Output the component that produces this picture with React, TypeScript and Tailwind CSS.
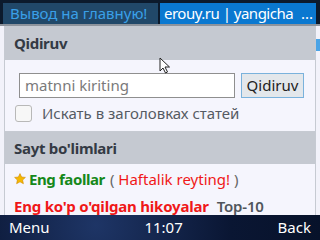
import React from "react";

const Star = () => (
  <svg viewBox="0 0 12 12" className="h-[12px] w-[12px] shrink-0">
    <path
      d="M6 0.6l1.6 3.4 3.8.4-2.8 2.6.8 3.7L6 8.8 2.6 10.7l.8-3.7L.6 4.4l3.8-.4z"
      fill="#f5b800"
      stroke="#d08a00"
      strokeWidth="0.6"
    />
  </svg>
);

const Cursor = () => (
  <svg viewBox="0 0 12 18" className="absolute left-[159px] top-[57px] h-[18px] w-[12px]">
    <path d="M1 1v13l3-3 2.5 5 2-1-2.5-5h4.5z" fill="#fff" stroke="#222" strokeWidth="1" />
  </svg>
);

export default function App() {
  return (
    <div
      className="relative flex h-[240px] w-[320px] flex-col overflow-hidden bg-[#0c1a2c]"
      style={{ fontFamily: '"Noto Sans", "DejaVu Sans", sans-serif' }}
    >
      {/* tabs */}
      <div className="flex h-[24px] shrink-0 gap-[2px] px-[3px] pt-[3px]">
        <div className="flex w-[155px] shrink-0 items-center bg-[#214869] pl-[7px] text-[15px] leading-none text-[#3aa0e8]">
          Вывод на главную!
        </div>
        <div className="flex w-[156px] shrink-0 items-center justify-between whitespace-nowrap bg-[#0a78d0] pl-[4px] pr-[3px] text-[15px] leading-none tracking-[-0.5px] text-white">
          <span>erouy.ru | yangicha</span>
          <span className="tracking-[0px]">...</span>
        </div>
      </div>

      {/* page */}
      <div className="flex min-h-0 flex-1 overflow-hidden border-t-[2px] border-[#8d939c] bg-[#f2f2fa]">
        <div className="ml-[4px] flex w-[312px] flex-col border-x border-[#c6cad2] bg-[#f5f5fd]">
          <div className="flex h-[34px] shrink-0 items-center bg-[#c5c9d1] pl-[9px] text-[15px] font-bold tracking-[-0.3px] text-[#343a44]">
            Qidiruv
          </div>
          <div className="flex shrink-0 flex-col border-b border-[#c6cad2] pb-[9px] pt-[13px]">
            <div className="flex items-center gap-[6px] pl-[14px]">
              <div className="flex h-[25px] w-[216px] items-center border border-[#8f8f8f] bg-white pl-[5px] text-[15px] text-[#7a7a7a]">
                matnni kiriting
              </div>
              <div className="flex h-[25px] w-[63px] items-center justify-center border border-[#7ab2dc] bg-[#e3e7eb] text-[15px] text-[#222]">
                Qidiruv
              </div>
            </div>
            <div className="mt-[7px] flex h-[17px] items-center gap-[10px] pl-[10px] leading-[17px]">
              <div className="h-[17px] w-[17px] rounded-[3px] border border-[#b8b8b8] bg-[#f7f7f7]" />
              <span className="text-[15px] text-[#555b63]">Искать в заголовках статей</span>
            </div>
          </div>
          <div className="flex h-[32px] shrink-0 items-center bg-[#c5c9d1] pl-[9px] text-[15px] font-bold tracking-[-0.3px] text-[#343a44]">
            Sayt bo'limlari
          </div>
          <div className="flex shrink-0 items-center gap-[3px] pl-[9px] pt-[4px] text-[15px] leading-[22px]">
            <Star />
            <span className="font-bold tracking-[-0.4px] text-[#15881a]">Eng faollar</span>
            <span className="pl-[2px] text-[#666]">
              ( <span className="text-[#f01818]">Haftalik reyting!</span> )
            </span>
          </div>
          <div className="flex shrink-0 items-center gap-[8px] whitespace-nowrap pl-[9px] text-[15px] leading-[32px]">
            <span className="font-bold tracking-[-0.2px] text-[#f01818]">Eng ko'p o'qilgan hikoyalar</span>
            <span className="font-semibold tracking-[-0.2px] text-[#50555c]">Top-10</span>
          </div>
        </div>
        <div className="flex w-[4px] flex-col">
          <div className="mt-[13px] h-[12px] w-[4px] bg-[#4aa3e6]" />
        </div>
      </div>

      {/* softkeys */}
      <div className="flex h-[25px] shrink-0 items-center justify-between bg-[radial-gradient(circle_at_30%_40%,#1e3566_0,#0a1633_60%,#07122a_100%)] px-[9px] text-[15px] leading-none text-white">
        <span>Menu</span>
        <span>11:07</span>
        <span>Back</span>
      </div>

      <Cursor />
    </div>
  );
}
